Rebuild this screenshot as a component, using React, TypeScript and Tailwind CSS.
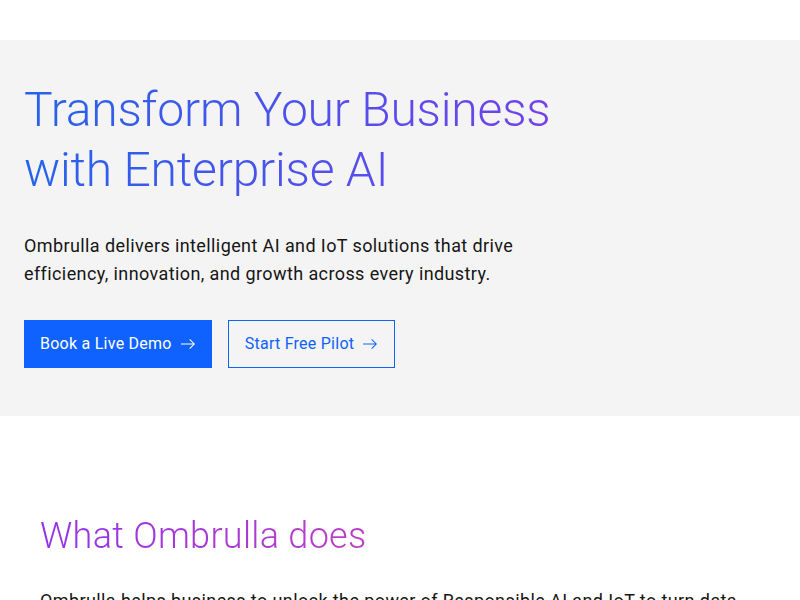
const ArrowRight = () => (
  <svg width="16" height="16" viewBox="0 0 16 16" fill="currentColor" aria-hidden="true">
    <path d="M9.3 3.7L13.1 7.5 1 7.5 1 8.5 13.1 8.5 9.3 12.3 10 13 15 8 10 3z" />
  </svg>
);

export default function App() {
  return (
    <div className="min-h-[7900px] bg-white font-['Roboto','Liberation_Sans',sans-serif] text-[#161616]">
      {/* Header placeholder */}
      <header className="h-10 bg-white" />

      {/* Hero */}
      <section className="bg-[#f4f4f4] px-6 pt-10 pb-12">
        <h1 className="bg-linear-to-r/srgb from-[#2563eb] to-[#9333ea] bg-clip-text text-[48px] font-light leading-[60px] tracking-[-0.2px] text-transparent">
          Transform Your Business
          <br />
          with Enterprise AI
        </h1>
        <p className="mt-8 max-w-[540px] text-[18px] leading-[28px] tracking-[0.4px] text-[#161616]">
          Ombrulla delivers intelligent AI and IoT solutions that drive efficiency, innovation, and growth across every industry.
        </p>
        <div className="mt-8 flex gap-4">
          <button className="flex h-12 items-center gap-2 bg-[#0f62fe] px-4 text-[16px] tracking-[0.25px] text-white">
            Book a Live Demo
            <ArrowRight />
          </button>
          <button className="flex h-12 items-center gap-2 border border-[#0f62fe] px-4 text-[16px] tracking-[0.25px] text-[#0f62fe]">
            Start Free Pilot
            <ArrowRight />
          </button>
        </div>
      </section>

      {/* What Ombrulla does */}
      <section className="px-10 pt-[98px]">
        <h2 className="bg-linear-to-r/srgb from-[#9333ea] to-[#ec4899] bg-clip-text text-[36px] font-light leading-[45px] tracking-[0.3px] text-transparent">
          What Ombrulla does
        </h2>
        <p className="mt-7 text-[18px] leading-[28px] tracking-[0.4px] text-[#161616]">
          Ombrulla helps business to unlock the power of Responsible AI and IoT to turn data into real-time insights, smarter decisions and measurable outcomes.
        </p>
      </section>
    </div>
  );
}
